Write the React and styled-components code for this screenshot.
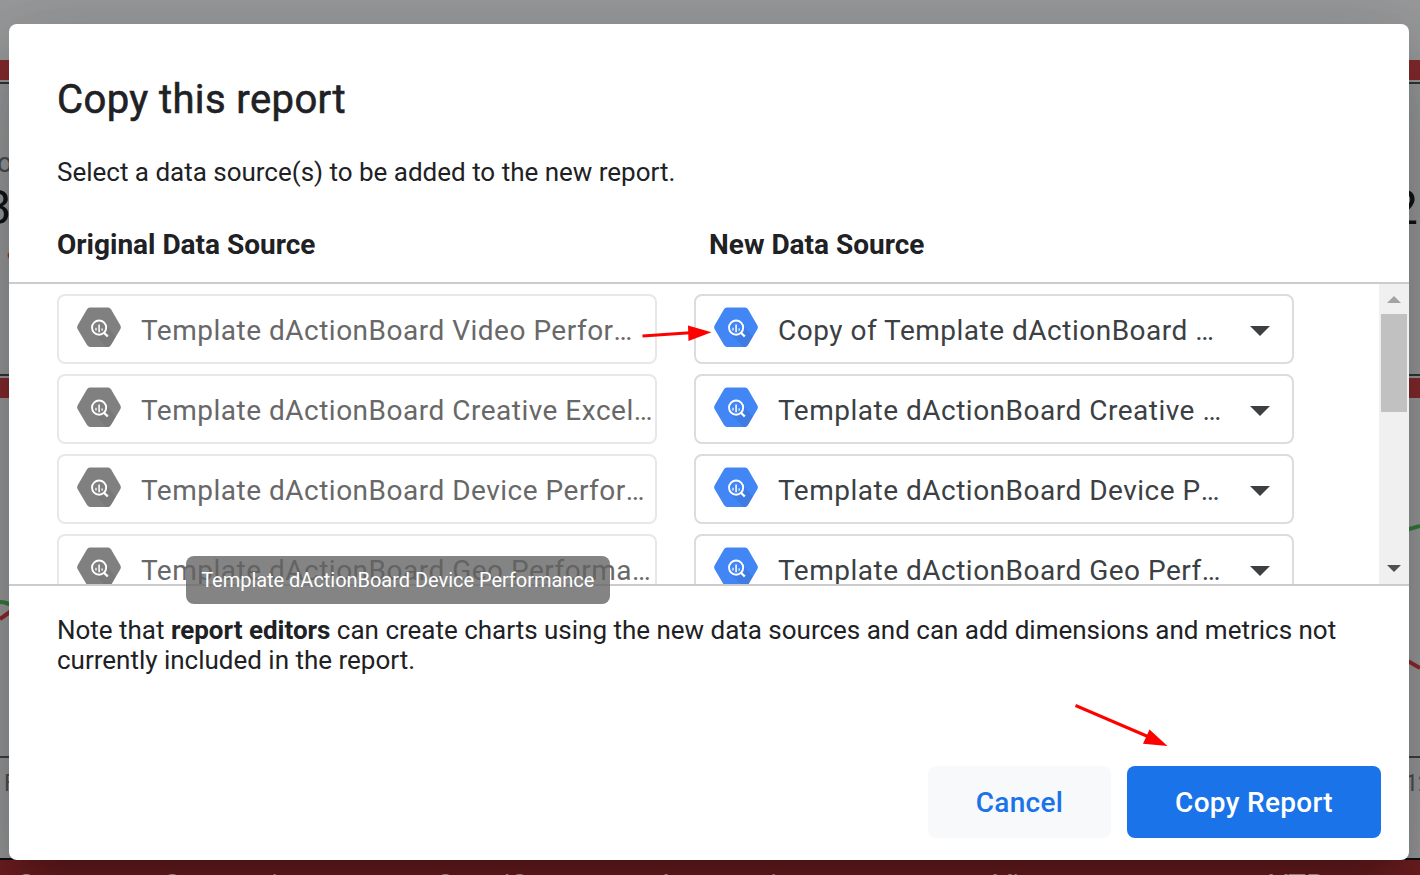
import React from "react";
import styled, { createGlobalStyle } from "styled-components";

const GlobalStyle = createGlobalStyle`
  * { box-sizing: border-box; }
  html, body { margin: 0; padding: 0; overflow: hidden; }
  body { font-family: Roboto, "Liberation Sans", sans-serif; color: #202124; }
  h1, h2, p { margin: 0; }
  button { font-family: inherit; border: 0; cursor: pointer; }
`;

const Screen = styled.main`
  display: grid;
  width: 1420px;
  height: 875px;
  overflow: hidden;
  background: #999a9b;
`;

const Dashboard = styled.div`
  grid-area: 1 / 1;
  display: flex;
  flex-direction: column;
  width: 1420px;
  height: 875px;
  padding-top: 60px;
  overflow: hidden;
`;

const Band = styled.div`
  flex: none;
  height: 20px;
  background: #852a2d;
`;

const ScorePanel = styled.section`
  flex: none;
  height: 294px;
  margin: 2px 0;
  padding-top: 65px;
  border-top: 2px solid #323536;
  border-bottom: 2px solid #323536;
  overflow: hidden;
`;

const ScoreLine = styled.div`
  display: flex;
  justify-content: space-between;
  align-items: center;
  white-space: nowrap;
  height: ${(p) => p.$height}px;
  margin: 0 ${(p) => p.$right}px 0 ${(p) => p.$left}px;
  font-size: ${(p) => p.$size}px;
  color: ${(p) => p.$color};
`;

const ChartPanel = styled.section`
  flex: none;
  height: 462px;
  border-bottom: 2px solid #0d1012;
  overflow: hidden;
`;

const ChartSvg = styled.svg`
  display: block;
  width: 1420px;
  height: 360px;
`;

const AxisLabels = styled.div`
  display: flex;
  justify-content: space-between;
  margin: 12px -11px 0 4px;
  font-size: 23px;
  line-height: 28px;
  color: #4c4f51;
`;

const TableHeader = styled.div`
  display: grid;
  grid-template-columns: 146px 273px 227px 331px 276px 1fr;
  flex: none;
  height: 60px;
  padding: 8px 0 0 16px;
  background: #701e21;
  color: #b5aeae;
  font-size: 30px;
  line-height: 34px;
`;

const Dialog = styled.div`
  grid-area: 1 / 1;
  position: relative;
  display: flex;
  flex-direction: column;
  width: 1400px;
  height: 836px;
  margin: 24px 0 0 9px;
  border-radius: 8px;
  background: #fff;
  box-shadow:
    0 22px 30px -14px rgba(0, 0, 0, 0.2),
    0 48px 76px 6px rgba(0, 0, 0, 0.14),
    0 18px 92px 16px rgba(0, 0, 0, 0.12);
`;

const DialogHeader = styled.header`
  flex: none;
  height: 258px;
  padding: 48px 48px 0;
`;

const Title = styled.h1`
  font-size: 40px;
  font-weight: 400;
  line-height: 56px;
  letter-spacing: 0.4px;
  -webkit-text-stroke: 0.6px currentColor;
`;

const Lead = styled.p`
  margin-top: 28px;
  font-size: 26px;
  line-height: 32px;
  letter-spacing: -0.01px;
`;

const ColumnTitles = styled.div`
  display: grid;
  grid-template-columns: 652px 1fr;
  margin-top: 40px;
`;

const ColumnTitle = styled.h2`
  font-size: 28px;
  font-weight: 700;
  line-height: 34px;
`;

const SourceArea = styled.div`
  flex: none;
  display: flex;
  height: 304px;
  border-top: 2px solid #ccc;
  border-bottom: 2px solid #ccc;
`;

const SourceList = styled.div`
  flex: 1;
  display: flex;
  flex-direction: column;
  gap: 10px;
  padding: 10px 0 0 48px;
  overflow: hidden;
`;

const SourceRow = styled.div`
  flex: none;
  display: flex;
  gap: 37px;
`;

const SourceField = styled.div`
  display: flex;
  align-items: center;
  width: 600px;
  height: 70px;
  padding: 0 22px 0 18px;
  border: 2px solid ${(p) => (p.$disabled ? "#e8e8e8" : "#dadce0")};
  border-radius: 8px;
  color: ${(p) => (p.$disabled ? "#686868" : "#3c4043")};
`;

const SourceName = styled.span`
  flex: 1 0 0;
  width: 0;
  margin: 4px 0 0 20px;
  font-size: 28px;
  line-height: 36px;
  letter-spacing: 0.5px;
  white-space: nowrap;
`;

const Ellipsis = styled.span`
  display: inline-block;
`;

const HexIcon = styled.svg`
  flex: none;
  width: 44px;
  height: 40px;
  margin-top: -4px;
`;

const Caret = styled.span`
  margin-top: 3px;
  border: 10px solid transparent;
  border-top-color: #3c4043;
  border-bottom: 0;
`;

const Scrollbar = styled.div`
  display: flex;
  flex-direction: column;
  align-items: center;
  width: 30px;
  background: #f0f0f0;
`;

const ScrollButton = styled.div`
  display: flex;
  align-items: center;
  justify-content: center;
  height: 30px;
`;

const ScrollArrow = styled.svg`
  width: 14px;
  height: 7px;
  margin-top: ${(p) => p.$shift}px;
`;

const Thumb = styled.div`
  width: 26px;
  height: 98px;
  margin-bottom: auto;
  background: #c1c1c1;
`;

const Note = styled.p`
  padding: 29px 48px 0;
  font-size: 26px;
  line-height: 30px;
  letter-spacing: -0.01px;
`;

const Actions = styled.footer`
  display: flex;
  justify-content: flex-end;
  gap: 16px;
  margin-top: auto;
  padding: 0 28px 22px;
`;

const ActionButton = styled.button`
  width: ${(p) => p.$width}px;
  height: 72px;
  padding: 0;
  border-radius: 8px;
  background: ${(p) => (p.$primary ? "#1a73e8" : "#f8f9fb")};
  color: ${(p) => (p.$primary ? "#fff" : "#1a73e8")};
  font-size: 28px;
  font-weight: 500;
  letter-spacing: 0.3px;
`;

const Tooltip = styled.div`
  position: absolute;
  left: 176.5px;
  top: 532px;
  width: 424.5px;
  height: 48px;
  border-radius: 8px;
  background: rgba(97, 97, 97, 0.78);
  color: #fff;
  font-size: 20px;
  line-height: 48px;
  letter-spacing: -0.03px;
  text-align: center;
  white-space: nowrap;
`;

const Pointer = styled.svg`
  position: absolute;
  left: ${(p) => p.$x}px;
  top: ${(p) => p.$y}px;
`;

function BigQueryIcon({ muted }) {
  return (
    <HexIcon viewBox="0 0 44 40">
      <path
        d="M12.9 0.6H31.1Q33 0.6 34 2.3L43.3 18.2Q44.4 20.2 43.3 22.2L34 38.1Q33 39.9 31.1 39.9H12.9Q11 39.9 10 38.1L0.7 22.2Q-0.4 20.2 0.7 18.2L10 2.3Q11 0.6 12.9 0.6Z"
        fill={muted ? "#808080" : "#4285f4"}
      />
      <path
        d="M27.5 15.7L38.6 29.6L34 37.5Q33 39.9 31.1 39.9H29.5L16.5 26.2Z"
        fill={muted ? "#797979" : "#407be2"}
      />
      <circle cx="22.1" cy="20.6" r="7.1" fill={muted ? "#808080" : "#4285f4"} stroke="#fff" strokeWidth="1.9" />
      <path d="M27.2 26L30.8 29.5" stroke="#fff" strokeWidth="2.4" />
      <path d="M19 20.8V23.6M25.2 21.6V23.6" stroke="#fff" strokeOpacity="0.8" strokeWidth="1.6" />
      <path d="M22.1 17.6V25.2" stroke="#fff" strokeOpacity="0.85" strokeWidth="1.8" />
    </HexIcon>
  );
}

const sources = [
  { from: "Template dActionBoard Video Perfor", to: "Copy of Template dActionBoard " },
  { from: "Template dActionBoard Creative Excel", to: "Template dActionBoard Creative " },
  { from: "Template dActionBoard Device Perfor", to: "Template dActionBoard Device P" },
  { from: "Template dActionBoard Geo Performa", to: "Template dActionBoard Geo Perf" },
];

export default function App() {
  return (
    <Screen>
      <GlobalStyle />
      <Dashboard>
        <Band />
        <ScorePanel>
          <ScoreLine $height={28} $left={-3} $right={0} $size={27} $color="#4c4f51">
            <span>o</span>
          </ScoreLine>
          <ScoreLine $height={60} $left={-16} $right={2} $size={49} $color="#111517">
            <span>3</span>
            <span>2</span>
          </ScoreLine>
          <ScoreLine $height={34} $left={6} $right={0} $size={20} $color="#a82c30">
            <span>●</span>
          </ScoreLine>
        </ScorePanel>
        <Band />
        <ChartPanel>
          <ChartSvg viewBox="0 0 1420 360" fill="none" strokeWidth="4">
            <path d="M0 204Q7 204 14 209M1406 132L1420 128" stroke="#367a3b" />
            <path d="M0 221L14 211M1406 262L1420 270" stroke="#8f282c" />
            <path d="M0 359H1420" stroke="#3e4041" strokeWidth="2" />
          </ChartSvg>
          <AxisLabels>
            <span>F</span>
            <span>12</span>
          </AxisLabels>
        </ChartPanel>
        <TableHeader>
          <span>Cost</span>
          <span>Conversions</span>
          <span>Cost/Conv</span>
          <span>Impressions</span>
          <span>Views</span>
          <span>VTR</span>
        </TableHeader>
      </Dashboard>

      <Dialog role="dialog">
        <DialogHeader>
          <Title>Copy this report</Title>
          <Lead>Select a data source(s) to be added to the new report.</Lead>
          <ColumnTitles>
            <ColumnTitle>Original Data Source</ColumnTitle>
            <ColumnTitle>New Data Source</ColumnTitle>
          </ColumnTitles>
        </DialogHeader>

        <SourceArea>
          <SourceList>
            {sources.map((source) => (
              <SourceRow key={source.from}>
                <SourceField $disabled>
                  <BigQueryIcon muted />
                  <SourceName>
                    {source.from}
                    <Ellipsis>…</Ellipsis>
                  </SourceName>
                </SourceField>
                <SourceField>
                  <BigQueryIcon />
                  <SourceName>
                    {source.to}
                    <Ellipsis>…</Ellipsis>
                  </SourceName>
                  <Caret />
                </SourceField>
              </SourceRow>
            ))}
          </SourceList>
          <Scrollbar>
            <ScrollButton>
              <ScrollArrow $shift={1} viewBox="0 0 14 7">
                <path d="M0 7L7 0L14 7Z" fill="#a3a3a3" />
              </ScrollArrow>
            </ScrollButton>
            <Thumb />
            <ScrollButton>
              <ScrollArrow $shift={-1} viewBox="0 0 14 7">
                <path d="M0 0L7 7L14 0Z" fill="#505050" />
              </ScrollArrow>
            </ScrollButton>
          </Scrollbar>
        </SourceArea>

        <Note>
          Note that <b>report editors</b> can create charts using the new data sources and can add
          dimensions and metrics not currently included in the report.
        </Note>

        <Actions>
          <ActionButton $width={183}>Cancel</ActionButton>
          <ActionButton $width={254} $primary>Copy Report</ActionButton>
        </Actions>

        <Tooltip>Template dActionBoard Device Performance</Tooltip>
        <Pointer $x={633} $y={300} width="72" height="20" viewBox="0 0 72 20">
          <path d="M0.5 12L48 8.8" stroke="#f00" strokeWidth="3" />
          <path d="M46 1.5L69.5 8.3L46.5 17Z" fill="#f00" />
        </Pointer>
        <Pointer $x={1066} $y={680} width="94" height="44" viewBox="0 0 94 44">
          <path d="M0.5 1.5L74 33" stroke="#f00" strokeWidth="3" />
          <path d="M74.5 25.5L92.5 42L68 39.8Z" fill="#f00" />
        </Pointer>
      </Dialog>
    </Screen>
  );
}
